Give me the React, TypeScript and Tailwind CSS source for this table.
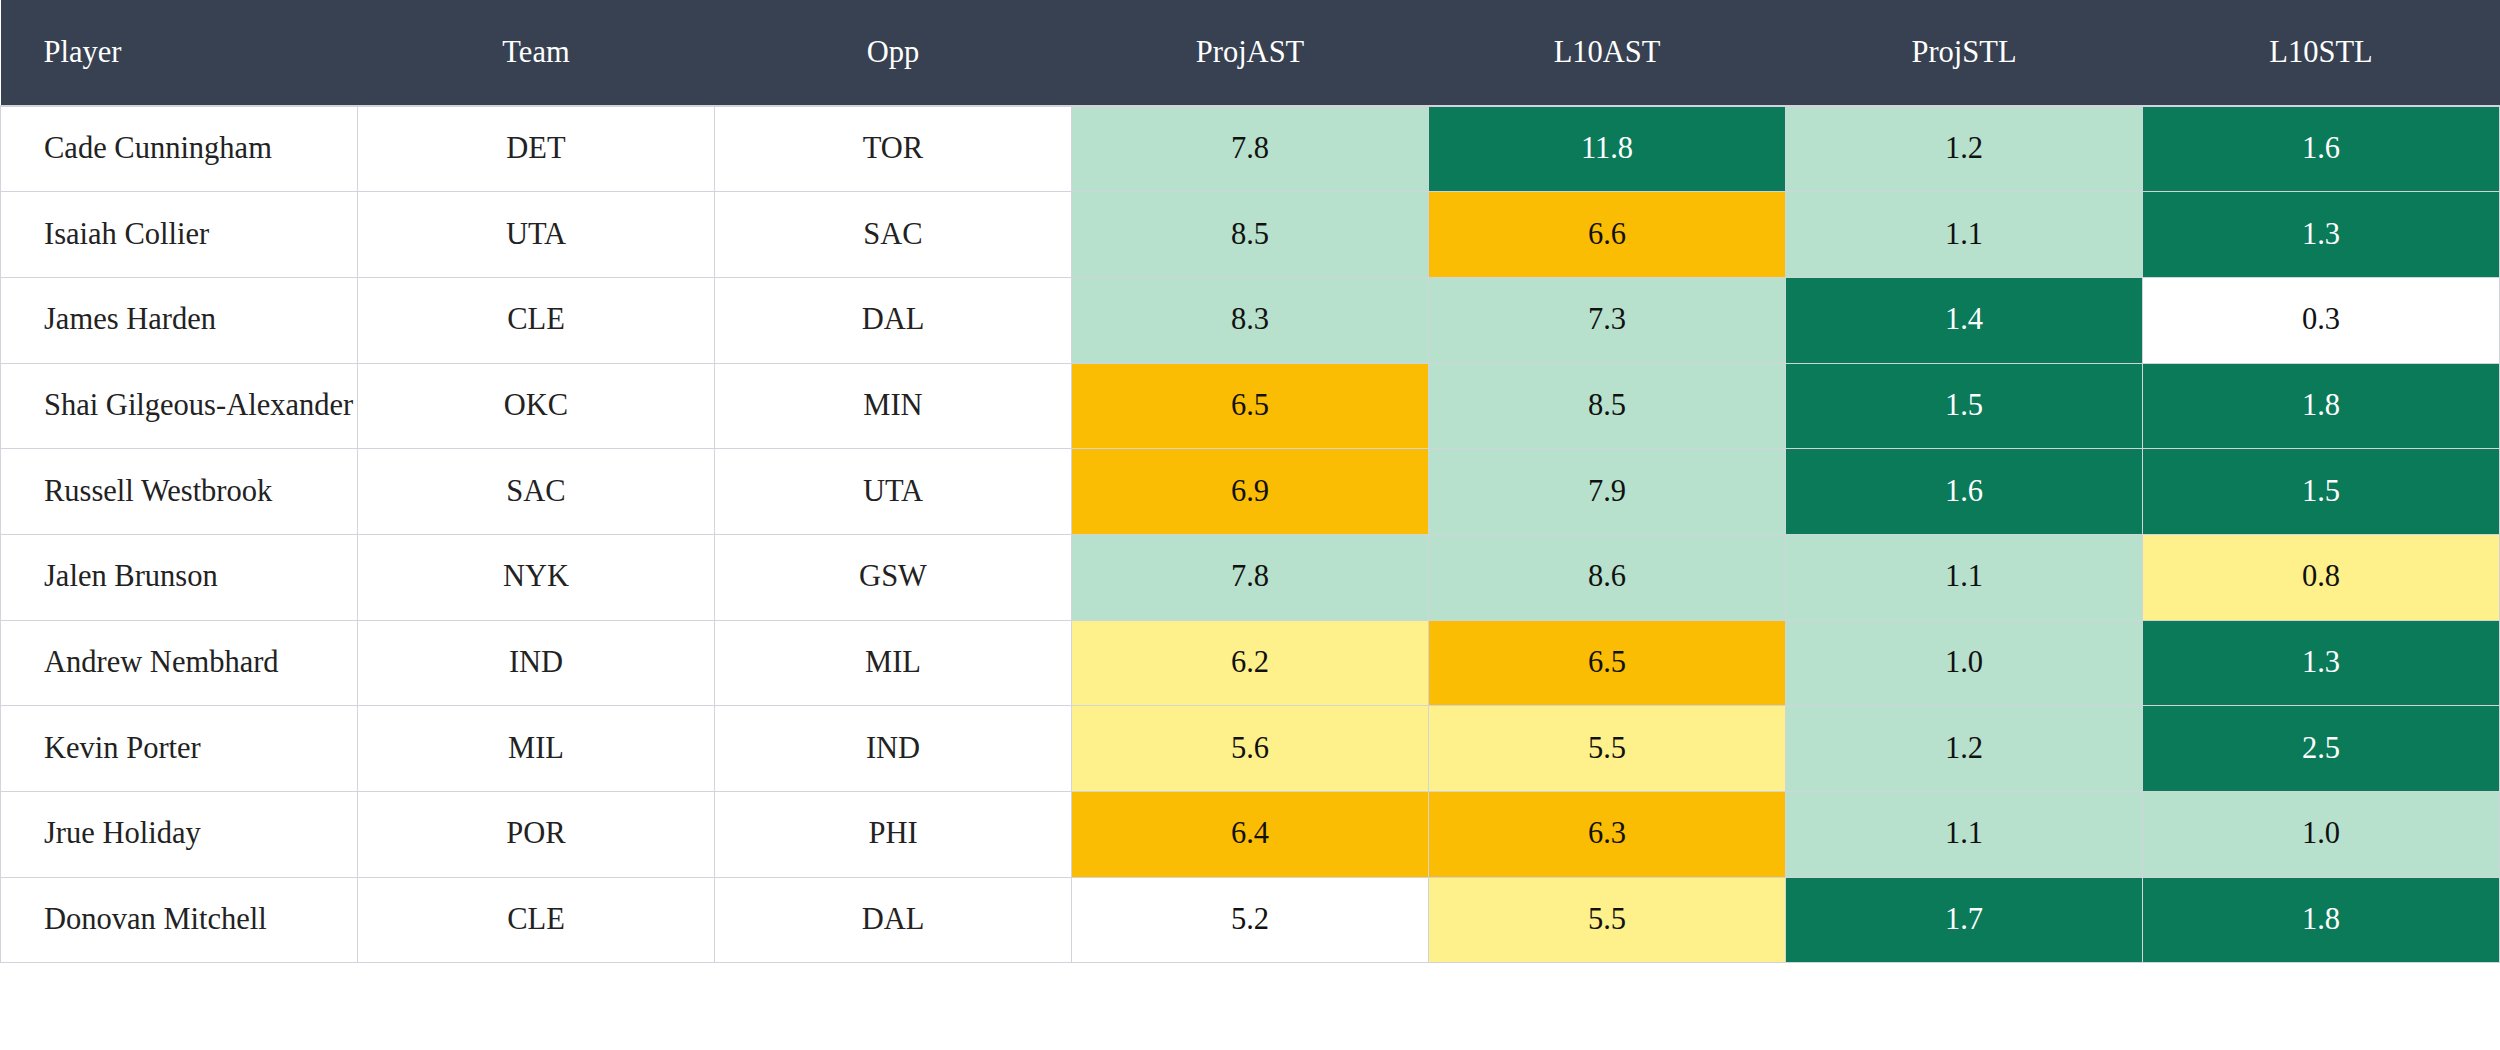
import React from "react";

type C = "lg" | "dg" | "gd" | "ly" | "w";

const rows: [string, string, string, [string, C][]][] = [
  ["Cade Cunningham", "DET", "TOR", [["7.8", "lg"], ["11.8", "dg"], ["1.2", "lg"], ["1.6", "dg"]]],
  ["Isaiah Collier", "UTA", "SAC", [["8.5", "lg"], ["6.6", "gd"], ["1.1", "lg"], ["1.3", "dg"]]],
  ["James Harden", "CLE", "DAL", [["8.3", "lg"], ["7.3", "lg"], ["1.4", "dg"], ["0.3", "w"]]],
  ["Shai Gilgeous-Alexander", "OKC", "MIN", [["6.5", "gd"], ["8.5", "lg"], ["1.5", "dg"], ["1.8", "dg"]]],
  ["Russell Westbrook", "SAC", "UTA", [["6.9", "gd"], ["7.9", "lg"], ["1.6", "dg"], ["1.5", "dg"]]],
  ["Jalen Brunson", "NYK", "GSW", [["7.8", "lg"], ["8.6", "lg"], ["1.1", "lg"], ["0.8", "ly"]]],
  ["Andrew Nembhard", "IND", "MIL", [["6.2", "ly"], ["6.5", "gd"], ["1.0", "lg"], ["1.3", "dg"]]],
  ["Kevin Porter", "MIL", "IND", [["5.6", "ly"], ["5.5", "ly"], ["1.2", "lg"], ["2.5", "dg"]]],
  ["Jrue Holiday", "POR", "PHI", [["6.4", "gd"], ["6.3", "gd"], ["1.1", "lg"], ["1.0", "lg"]]],
  ["Donovan Mitchell", "CLE", "DAL", [["5.2", "w"], ["5.5", "ly"], ["1.7", "dg"], ["1.8", "dg"]]],
];

const cls: Record<C, string> = {
  lg: "bg-[#b7e1cd] text-[#111111]",
  dg: "bg-[#0b7a59] text-white",
  gd: "bg-[#fbbc04] text-[#111111]",
  ly: "bg-[#fef08a] text-[#111111]",
  w: "bg-white text-[#111111]",
};

export default function App() {
  return (
    <div className="w-[2500px] h-[1050px] bg-white" style={{ fontFamily: '"Liberation Serif", "Times New Roman", serif' }}>
      <table className="w-[2500px] table-fixed border-collapse text-[30.5px]">
        <colgroup>
          {Array.from({ length: 7 }).map((_, i) => (
            <col key={i} className="w-[357px]" />
          ))}
        </colgroup>
        <thead>
          <tr className="h-[106px] bg-[#374151] text-white border-b-2 border-[#d1d5db]">
            <th className="text-left font-normal pl-[43px]">Player</th>
            <th className="font-normal">Team</th>
            <th className="font-normal">Opp</th>
            <th className="font-normal">ProjAST</th>
            <th className="font-normal">L10AST</th>
            <th className="font-normal">ProjSTL</th>
            <th className="font-normal">L10STL</th>
          </tr>
        </thead>
        <tbody>
          {rows.map(([name, team, opp, vals]) => (
            <tr key={name} className="h-[85.7px]">
              <td className="border border-[#d1d5db] pl-[43px] text-[#222222] whitespace-nowrap overflow-visible">{name}</td>
              <td className="border border-[#d1d5db] text-center text-[#222222]">{team}</td>
              <td className="border border-[#d1d5db] text-center text-[#222222]">{opp}</td>
              {vals.map(([v, c], i) => (
                <td key={i} className={`border border-[#d1d5db] text-center ${cls[c]}`}>
                  {v}
                </td>
              ))}
            </tr>
          ))}
        </tbody>
      </table>
    </div>
  );
}
